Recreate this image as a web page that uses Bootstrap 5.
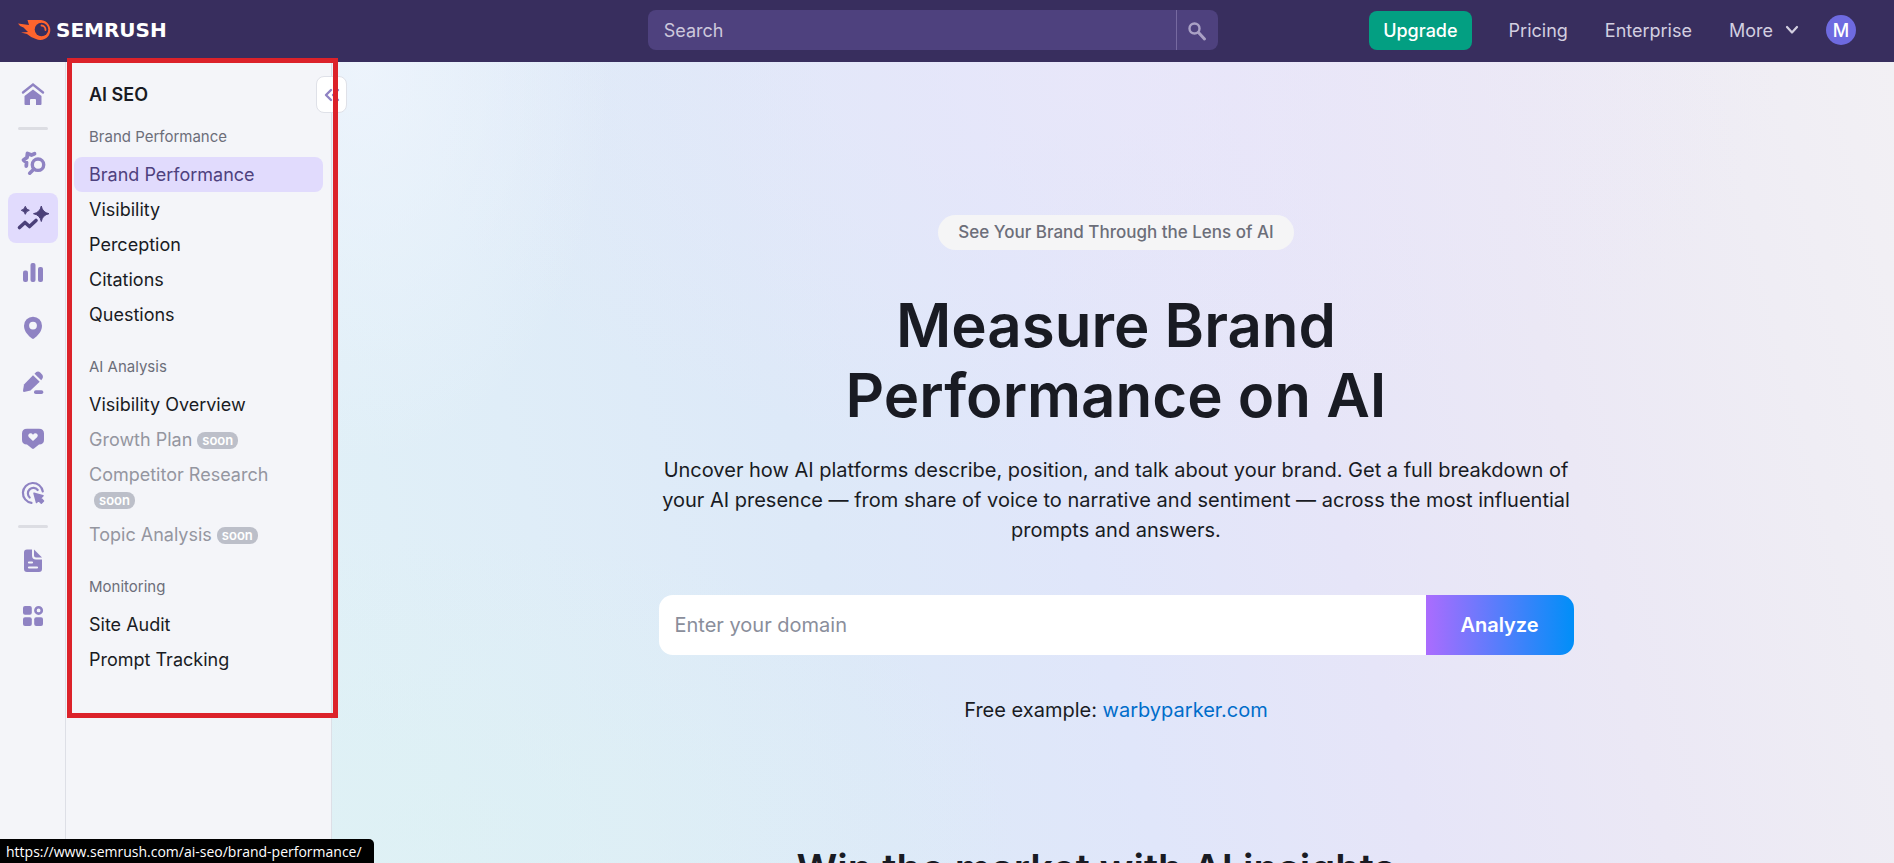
<!DOCTYPE html>
<html lang="en">
<head>
<meta charset="utf-8">
<meta name="viewport" content="width=device-width, initial-scale=1">
<title>AI SEO – Brand Performance</title>
<link href="https://cdn.jsdelivr.net/npm/bootstrap@5.3.0/dist/css/bootstrap.min.css" rel="stylesheet">
<style>
  body { font-family: Inter, "Liberation Sans", sans-serif; font-size: 18px; line-height: 25px; color: #191b23; background: #f4f5f9; }

  /* top bar */
  .topbar { height: 62px; background: #382e5e; padding: 0 38px 2px 18px; }
  .brand { font: bold 20px/24px "DejaVu Sans", sans-serif; color: #fff; }
  .top-search { width: 570px; height: 40px; margin-left: 481px; }
  .top-search .form-control, .top-search .btn { background: #4e417e; border: 0; color: #cdc8dc; font-size: 18px; border-radius: 8px; box-shadow: none; }
  .top-search .form-control { padding: 0 16px; }
  .top-search .form-control::placeholder { color: #cdc8dc; opacity: 1; }
  .top-search .btn { width: 42px; padding: 0; border-left: 1px solid #7669a0; }
  .btn-upgrade { --bs-btn-bg: #039f82; --bs-btn-color: #fff; --bs-btn-hover-bg: #048a71; --bs-btn-hover-color: #fff; height: 39px; padding: 0 14px; font-size: 18px; font-weight: 500; border-radius: 8px; border: 0; }
  .top-links { gap: 37px; }
  .top-link { color: #d3cfe0; font-size: 18px; text-decoration: none; }
  .avatar { width: 30px; height: 30px; background: #6e6ae0; color: #fff; font-size: 18px; font-weight: 500; border: 0; margin-left: -10px; }

  .shell { min-height: 0; }

  /* icon rail */
  .rail { width: 66px; padding: 7px 8px 0; gap: 5px; border-right: 1px solid #dddfe6; color: #8f83c3; }
  .rail a { width: 50px; height: 50px; color: inherit; border-radius: 8px; }
  .rail a.active { background: #e1dbfd; color: #4b4079; }
  .rail hr { width: 30px; height: 3px; margin: 3px 0; border: 0; border-radius: 2px; background: #dcdde3; opacity: 1; }
  .rail hr:last-of-type { margin-top: 2px; }
  .rail svg { overflow: visible; }

  /* section menu */
  .side { width: 266px; padding: 21px 8px 0; border-right: 1px solid #dddfe6; }
  .side-title { font-size: 18px; line-height: 24px; font-weight: 600; padding: 0 15px; margin-bottom: 21px; }
  .side-group { font-size: 15px; line-height: 18px; font-weight: 400; color: #6c6e79; padding: 0 15px; margin-bottom: 11px; }
  .side ul { margin-bottom: 26px; }
  .side li a { display: block; padding: 5px 15px; color: #191b23; text-decoration: none; border-radius: 8px; }
  .side li a.active { background: #e1dbfd; color: #4e417e; }
  .side li a.pending { color: #9496a0; }
  .soon { display: inline-block; background: #bcbfc9; color: #fff; font-size: 13px; line-height: 17px; font-weight: 600; padding: 0 5px; border-radius: 8px; margin-left: 5px; vertical-align: 1px; }
  .collapse-btn { top: 14px; right: -16px; width: 31px; height: 37px; background: #fff; border: 1px solid #dfe1e8; border-radius: 8px; color: #8f83c3; z-index: 2; }
  .marker { inset: -4px -7px auto 1px; height: 660px; border: 5px solid #dc222a; z-index: 3; pointer-events: none; }

  /* landing */
  .hero { scrollbar-width: none; padding: 153px 0 0 6px;
    background:
      radial-gradient(ellipse 36% 36% at 8% 95%, rgba(220,241,243,.6), rgba(220,241,243,0)),
      radial-gradient(ellipse 16% 50% at 2% 0, rgba(240,245,253,.8), rgba(240,245,253,0)),
      radial-gradient(ellipse 45% 50% at 48% 0, rgba(235,231,250,.6), rgba(235,231,250,0)),
      linear-gradient(76deg, #e1f1f7 0, #dde9f8 32%, #e0e6fa 47%, #e6e5f8 62%, #ebe8f5 76%, #efedf4 90%, #f2f0f4 100%); }
  .hero::-webkit-scrollbar { display: none; }
  .pill { height: 35px; line-height: 34px; padding: 0 20px; background: #f5f5f6; color: #6c6e79; border-radius: 18px; font-size: 17px; font-weight: 500; margin-bottom: 40px; }
  h1 { font-size: 60px; line-height: 70px; font-weight: 600; margin-bottom: 25px; }
  .hero-text { font-size: 20px; line-height: 30px; }
  .hero-text p { margin-bottom: 50px; }
  .measure { width: 100%; max-width: 915px; }
  .domain { height: 60px; margin-bottom: 40px; }
  .domain .form-control { border: 0; border-radius: 14px; padding: 0 16px; font-size: 20px; box-shadow: none; }
  .domain .form-control::placeholder { color: #8a8e9b; opacity: 1; }
  .domain .btn { width: 148px; border: 0; border-radius: 14px; color: #fff; font-size: 20px; font-weight: 600; background: linear-gradient(90deg, #ab6cfe, #008ff8); }
  .hero-text a { color: #006dca; text-decoration: none; }
  h2 { font-size: 40px; line-height: 48px; font-weight: 600; padding-right: 40px; margin-top: 120px; }

  .link-status { font: 14px/22px "Open Sans", "Noto Sans", sans-serif; background: #000; color: #fff; padding: 2px 12px 0 6px; border-radius: 0 5px 0 0; z-index: 5; }
</style>
</head>
<body class="vh-100 d-flex flex-column overflow-hidden">

<header class="topbar d-flex align-items-center flex-shrink-0">
  <a href="#" class="brand d-flex align-items-center gap-1 text-decoration-none">
    <svg width="34" height="22" viewBox="0 0 34 22" aria-hidden="true">
      <path fill="#ff642d" d="M0 4.500 L11 6 L9.500 1 H23 A10 10 0 1 1 18 20 Q12 18 9 15 L3 13.500 L10 13 L5.500 8.500 Q1.500 7.500 0 4.500Z"/>
      <circle cx="23.500" cy="10.500" r="6.800" fill="#382e5e"/>
      <path d="M23.500 6.500 A4.300 4.300 0 0 1 27.500 11" fill="none" stroke="#ff642d" stroke-width="1.800" stroke-linecap="round"/>
    </svg>
    <span>SEMRUSH</span>
  </a>
  <form class="top-search input-group flex-nowrap">
    <input class="form-control" type="search" placeholder="Search" aria-label="Search">
    <button class="btn" type="button" aria-label="Run search">
      <svg width="20" height="22" viewBox="0 0 20 22" fill="none" stroke="#aaa1c5" stroke-linecap="round"><circle cx="7.500" cy="7.500" r="5" stroke-width="2.400"/><path d="M11.500 11.500 L17.500 18" stroke-width="3"/></svg>
    </button>
  </form>
  <nav class="top-links d-flex align-items-center ms-auto">
    <button class="btn btn-upgrade" type="button">Upgrade</button>
    <a href="#" class="top-link">Pricing</a>
    <a href="#" class="top-link">Enterprise</a>
    <a href="#" class="top-link d-flex align-items-center gap-2"><span>More</span>
      <svg class="ms-1" width="14" height="10" viewBox="0 0 14 10" fill="none" stroke="currentColor" stroke-width="2.200" stroke-linecap="round" stroke-linejoin="round"><path d="M2 2 L7 7.500 L12 2"/></svg></a>
    <button class="avatar rounded-circle p-0" type="button">M</button>
  </nav>
</header>

<div class="shell d-flex flex-grow-1">
  <nav class="rail d-flex flex-column align-items-center flex-shrink-0" aria-label="Toolkits">
    <a href="#" class="d-flex align-items-center justify-content-center" aria-label="Home">
      <svg width="30" height="30" viewBox="0 0 30 30"><path d="M5 13.500 L15 5.500 L25 13.500" fill="none" stroke="currentColor" stroke-width="2.400" stroke-linecap="round"/><path fill="currentColor" d="M15 10.500 L23.500 17 V25 Q23.500 26 22.500 26 H18 V21 Q18 20 17 20 H13 Q12 20 12 21 V26 H7.500 Q6.500 26 6.500 25 V17Z"/></svg></a>
    <hr>
    <a href="#" class="d-flex align-items-center justify-content-center" aria-label="SEO">
      <svg width="30" height="30" viewBox="0 0 30 30" fill="none" stroke="currentColor" stroke-linecap="round" stroke-linejoin="round"><circle cx="20" cy="16.700" r="5.700" stroke-width="3.400"/><path d="M16 21 L11.700 25.200" stroke-width="3.600"/><path d="M16.500 5.800 L13.500 7 L9.500 5.500 L9 9.500 L5.500 12 L8.500 14.500 L8.300 18" stroke-width="3.800"/></svg></a>
    <a href="#" class="active d-flex align-items-center justify-content-center" aria-label="AI SEO">
      <svg width="30" height="30" viewBox="0 0 30 30"><path fill="currentColor" stroke="currentColor" stroke-linejoin="round" d="M23.300 3 Q24.500 9.500 31 10.700 Q24.500 12 23.300 18.500 Q22 12 15.500 10.700 Q22 9.500 23.300 3Z M7.300 3.300 Q8 6.700 11.300 7.300 Q8 8 7.300 11.300 Q6.500 8 3.300 7.300 Q6.500 6.700 7.300 3.300Z"/><path d="M1.500 24.500 L7 19.500 L11.500 23.500 L18 17.500" fill="none" stroke="currentColor" stroke-width="3.600" stroke-linecap="round" stroke-linejoin="round"/></svg></a>
    <a href="#" class="d-flex align-items-center justify-content-center" aria-label="Traffic and market">
      <svg width="30" height="30" viewBox="0 0 30 30" fill="currentColor"><rect x="5" y="12.500" width="5" height="11.500" rx="2"/><rect x="12.500" y="5" width="5" height="19" rx="2"/><rect x="20" y="9" width="5" height="15" rx="2"/></svg></a>
    <a href="#" class="d-flex align-items-center justify-content-center" aria-label="Local">
      <svg width="30" height="30" viewBox="0 0 30 30"><path fill="currentColor" fill-rule="evenodd" d="M15 3.700 A9 9 0 0 1 24 12.700 C24 19 19 23 16 25.600 Q15 26.300 14 25.600 C11 23 6 19 6 12.700 A9 9 0 0 1 15 3.700Z M15 8.700 A3.900 3.900 0 1 0 15 16.500 A3.900 3.900 0 1 0 15 8.700Z"/></svg></a>
    <a href="#" class="d-flex align-items-center justify-content-center" aria-label="Content">
      <svg width="30" height="30" viewBox="0 0 30 30" fill="currentColor"><path d="M5 22.800 L6 16.500 L15 7.200 L21.700 13.700 L12.500 22.500 L6 23.900 Q5 24 5 22.800Z"/><path d="M16.500 5.700 Q19.500 2 22.500 4.800 L24.300 6.800 Q26 9.500 23.200 12.200Z"/><rect x="16" y="22.300" width="9.300" height="3.700" rx="1.800"/></svg></a>
    <a href="#" class="d-flex align-items-center justify-content-center" aria-label="Social">
      <svg width="30" height="30" viewBox="0 0 30 30"><path fill="currentColor" d="M9 5.800 H21 Q26 5.800 26 10.500 V17 Q26 21.300 21 21.500 L16 25.500 Q15 26.300 14 25.500 L9 21.500 Q4 21.300 4 17 V10.500 Q4 5.800 9 5.800Z"/><path fill="#f4f5f9" d="M15 18 L10.700 14 Q9.500 12 11 10.800 Q13.200 9.500 15 11.700 Q16.800 9.500 19 10.800 Q20.500 12 19.300 14Z"/></svg></a>
    <a href="#" class="d-flex align-items-center justify-content-center" aria-label="Advertising">
      <svg width="30" height="30" viewBox="0 0 30 30" fill="none" stroke="currentColor" stroke-width="2.200" stroke-linecap="round"><path d="M24.800 13.500 A10 10 0 1 0 13.500 24.900"/><path d="M19.700 12 A5.500 5.500 0 1 0 11.700 19.500"/><path fill="currentColor" stroke-width="1.500" stroke-linejoin="round" d="M16 15.300 L25 17.700 L22.800 20 L25.500 23 L23.300 25.300 L20.500 22.500 L18.500 24.500Z"/></svg></a>
    <hr>
    <a href="#" class="d-flex align-items-center justify-content-center" aria-label="Reports">
      <svg width="30" height="30" viewBox="0 0 30 30"><path fill="currentColor" d="M9 3.500 H14 V9.500 Q14 13.500 18 13.500 H24 V23 Q24 26 21 26 H9 Q6 26 6 23 V6.500 Q6 3.500 9 3.500Z M16 3.500 L24 11.500 H18 Q16 11.500 16 9.500Z"/><path d="M11 16.500 H14 M11 21.500 H19" stroke="#f4f5f9" stroke-width="2.200" stroke-linecap="round"/></svg></a>
    <a href="#" class="d-flex align-items-center justify-content-center" aria-label="App center">
      <svg width="30" height="30" viewBox="0 0 30 30" fill="currentColor"><rect x="5" y="5" width="8.800" height="8.800" rx="2"/><rect x="5" y="16.200" width="8.800" height="8.800" rx="2"/><rect x="16.200" y="16.200" width="8.800" height="8.800" rx="2"/><circle cx="20.600" cy="9.400" r="3.200" fill="none" stroke="currentColor" stroke-width="2.600"/></svg></a>
  </nav>

  <aside class="side position-relative flex-shrink-0">
    <div class="side-title">AI SEO</div>
    <h6 class="side-group">Brand Performance</h6>
    <ul class="list-unstyled">
      <li><a href="#" class="active">Brand Performance</a></li>
      <li><a href="#">Visibility</a></li>
      <li><a href="#">Perception</a></li>
      <li><a href="#">Citations</a></li>
      <li><a href="#">Questions</a></li>
    </ul>
    <h6 class="side-group">AI Analysis</h6>
    <ul class="list-unstyled">
      <li><a href="#">Visibility Overview</a></li>
      <li><a href="#" class="pending">Growth Plan<span class="soon">soon</span></a></li>
      <li><a href="#" class="pending">Competitor Research <span class="soon">soon</span></a></li>
      <li><a href="#" class="pending">Topic Analysis<span class="soon">soon</span></a></li>
    </ul>
    <h6 class="side-group">Monitoring</h6>
    <ul class="list-unstyled">
      <li><a href="#">Site Audit</a></li>
      <li><a href="#">Prompt Tracking</a></li>
    </ul>
    <button class="collapse-btn position-absolute p-0 d-flex align-items-center justify-content-center" type="button" aria-label="Collapse menu">
      <svg width="16" height="14" viewBox="0 0 16 14" fill="none" stroke="currentColor" stroke-width="2.400" stroke-linecap="round" stroke-linejoin="round"><path d="M7 2 L2 7 L7 12 M14 2 L9 7 L14 12"/></svg>
    </button>
    <div class="marker position-absolute"></div>
  </aside>

  <main class="hero flex-grow-1 overflow-auto d-flex flex-column align-items-center text-center">
    <div class="pill flex-shrink-0">See Your Brand Through the Lens of AI</div>
    <h1>Measure Brand<br>Performance on AI</h1>
    <div class="hero-text measure">
      <p>Uncover how AI platforms describe, position, and talk about your brand. Get a full breakdown of your AI presence — from share of voice to narrative and sentiment — across the most influential prompts and answers.</p>
      <form class="domain input-group flex-nowrap">
        <input class="form-control" type="text" placeholder="Enter your domain" aria-label="Domain">
        <button class="btn" type="button">Analyze</button>
      </form>
      <div>Free example: <a href="#">warbyparker.com</a></div>
    </div>
    <h2>Win the market with AI insights</h2>
  </main>
</div>

<div class="link-status position-fixed bottom-0 start-0">https://www.semrush.com/ai-seo/brand-performance/</div>

<script src="https://cdn.jsdelivr.net/npm/bootstrap@5.3.0/dist/js/bootstrap.bundle.min.js"></script>
</body>
</html>
